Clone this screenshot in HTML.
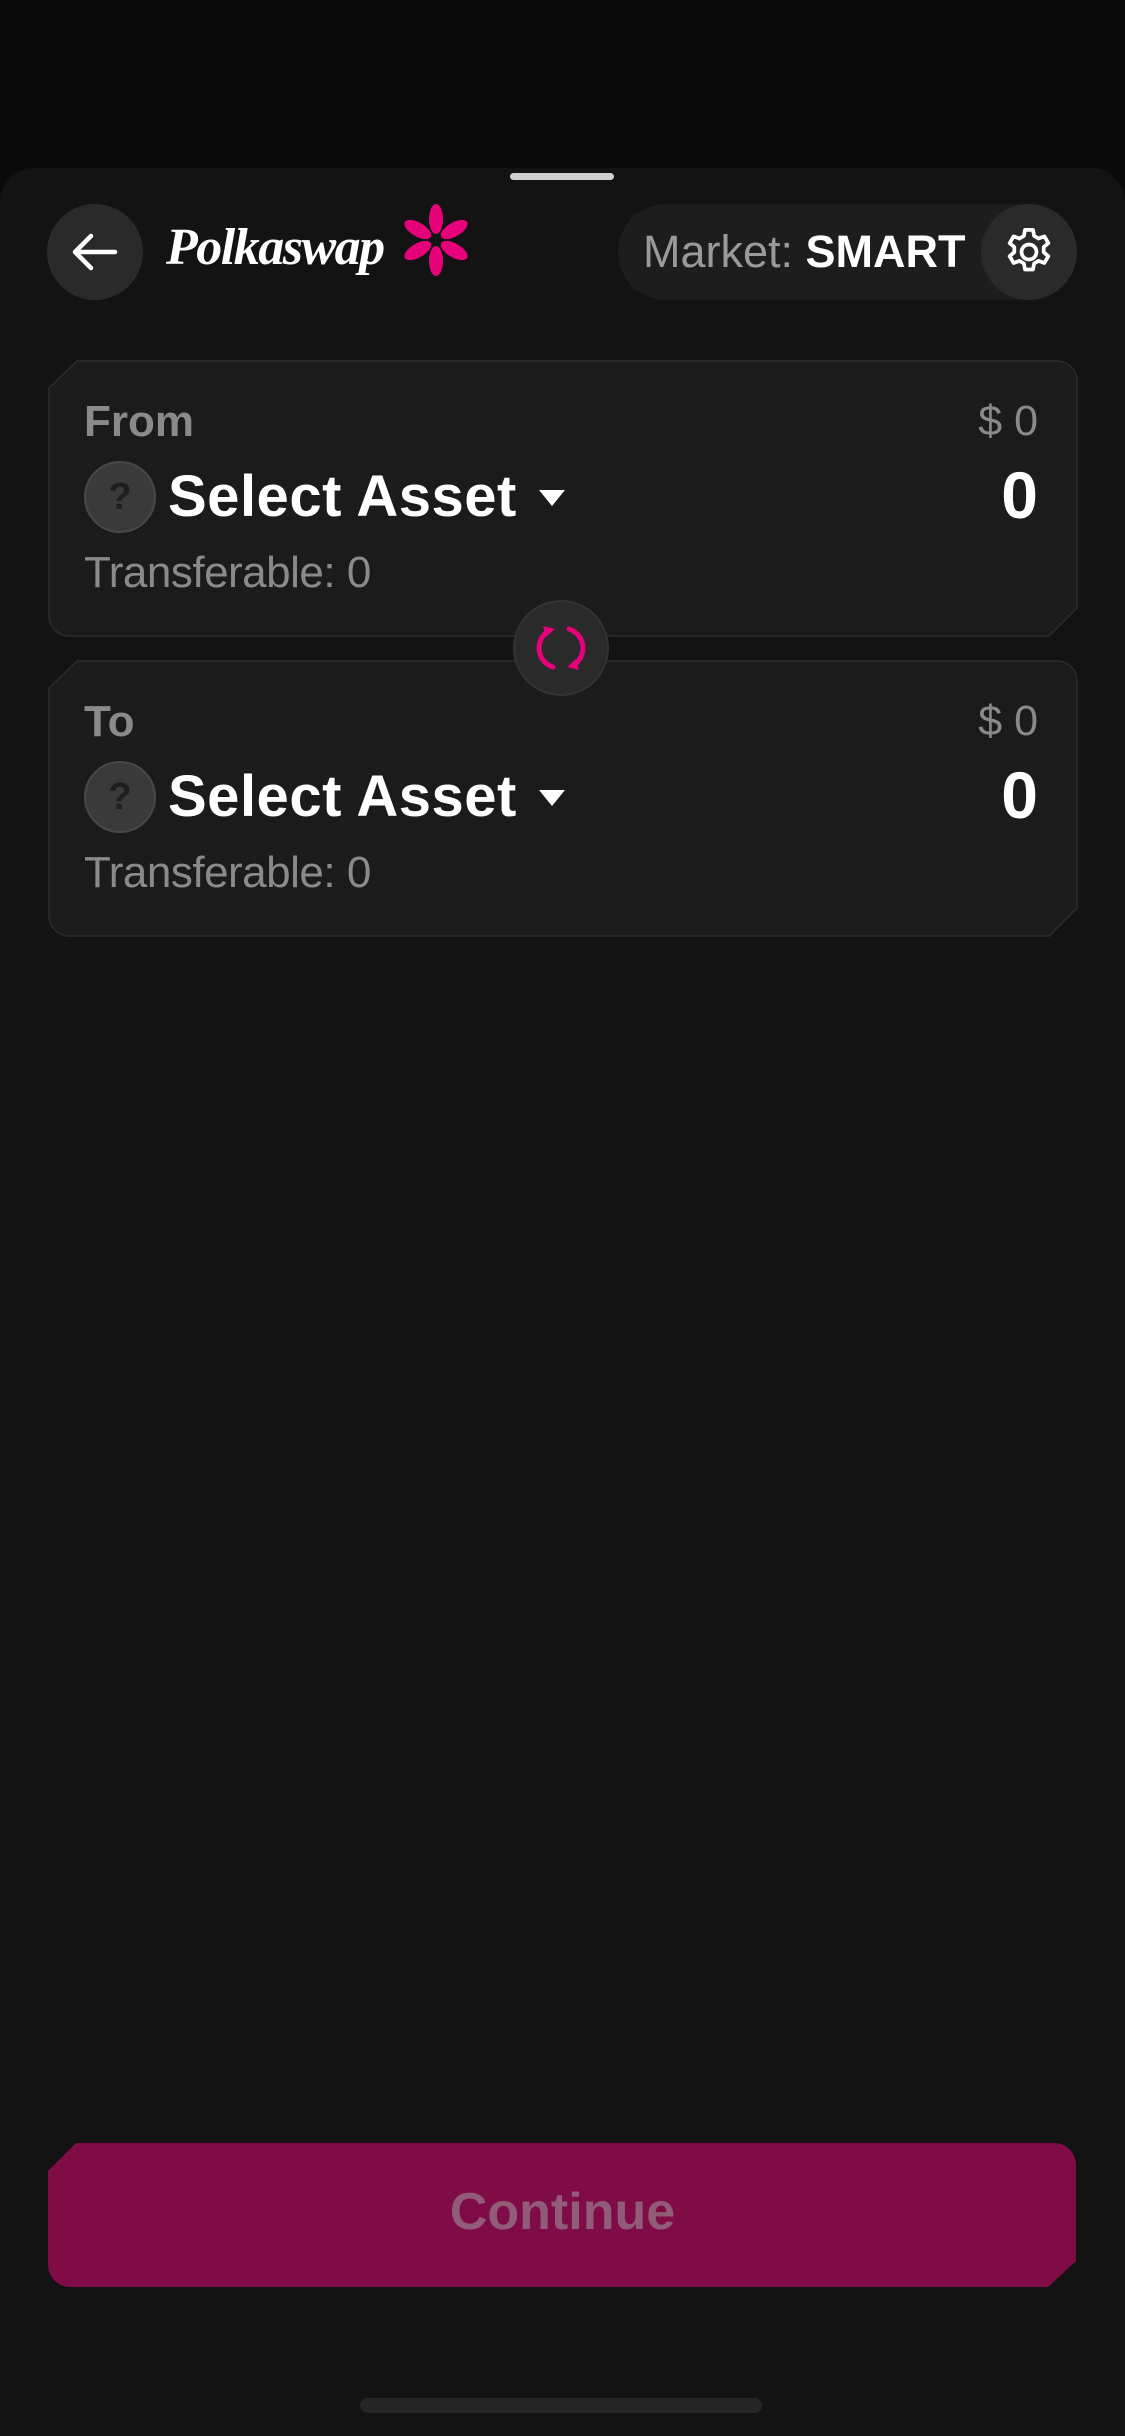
<!DOCTYPE html>
<html><head><meta charset="utf-8"><style>
*{margin:0;padding:0;box-sizing:border-box}
html,body{width:1125px;height:2436px;background:#0b0a0b;overflow:hidden;font-family:"Liberation Sans",sans-serif}
.sheet{position:absolute;left:0;top:168px;width:1125px;height:2268px;background:#131313;border-radius:34px 34px 0 0}
.abs{position:absolute}
.circ{position:absolute;border-radius:50%;background:#2a2a2a}
.lbl{position:absolute;color:#8a8a8a;font-weight:bold;font-size:44px}
.usd{position:absolute;right:87px;color:#8a8a8a;font-size:43px}
.sel{position:absolute;color:#fff;font-weight:bold;font-size:58px;letter-spacing:0.5px}
.zero{position:absolute;right:87px;color:#fff;font-weight:bold;font-size:66px}
.tr{position:absolute;color:#8a8a8a;font-size:44px;letter-spacing:-0.5px}
.q{position:absolute;width:72px;height:72px;border-radius:50%;background:#3a3a3a;border:2px solid #484848;color:#1e1e1e;font-weight:bold;font-size:38px;text-align:center;line-height:68px}
</style></head><body>
<div class="sheet">
<div class="abs" style="left:510px;top:5px;width:104px;height:7px;border-radius:4px;background:#cfcfcf"></div>
</div>
<div class="circ" style="left:47px;top:204px;width:96px;height:96px"></div>
<svg class="abs" style="left:67px;top:224px" width="56" height="56" viewBox="0 0 56 56"><path d="M48 28H10M24 12L8 28l16 16" stroke="#fff" stroke-width="4.5" fill="none" stroke-linecap="round" stroke-linejoin="round"/></svg>
<div class="abs" style="left:166px;top:218px;color:#fff;font-family:'Liberation Serif',serif;font-style:italic;font-weight:bold;font-size:52px;letter-spacing:-1.5px">Polkaswap</div>
<svg class="abs" style="left:400px;top:202px" width="72" height="76" viewBox="-36 -38 72 76">
<g fill="#e6007a"><ellipse cx="0" cy="-21" rx="7" ry="15"/><ellipse cx="0" cy="-21" rx="7" ry="15" transform="rotate(60)"/><ellipse cx="0" cy="-21" rx="7" ry="15" transform="rotate(120)"/><ellipse cx="0" cy="-21" rx="7" ry="15" transform="rotate(180)"/><ellipse cx="0" cy="-21" rx="7" ry="15" transform="rotate(240)"/><ellipse cx="0" cy="-21" rx="7" ry="15" transform="rotate(300)"/></g></svg>
<div class="abs" style="left:618px;top:204px;width:458px;height:96px;border-radius:48px;background:#1e1d1e"></div>
<div class="abs" style="left:643px;top:226px;font-size:45px;color:#9a9a9a">Market: <b style="color:#fff">SMART</b></div>
<div class="circ" style="left:981px;top:204px;width:96px;height:96px"></div>
<svg class="abs" style="left:1001px;top:224px" width="56" height="56" viewBox="0 0 24 24"><path fill="none" stroke="#fff" stroke-width="1.6" stroke-linejoin="round" d="M10.3 2.5h3.4l.5 2.6 1.9 1.1 2.5-.9 1.7 2.9-2 1.7v2.2l2 1.7-1.7 2.9-2.5-.9-1.9 1.1-.5 2.6h-3.4l-.5-2.6-1.9-1.1-2.5.9-1.7-2.9 2-1.7v-2.2l-2-1.7 1.7-2.9 2.5.9 1.9-1.1z"/><circle cx="12" cy="12" r="3.2" fill="none" stroke="#fff" stroke-width="1.6"/></svg>
<svg class="abs" style="left:48px;top:360px" width="1030" height="277"><path d="M29 1H1009a20 20 0 0 1 20 20V248L1001 276H21a20 20 0 0 1-20-20V28Z" fill="#1c1b1c" stroke="#2c2c2c" stroke-width="1.5"/></svg>
<svg class="abs" style="left:48px;top:660px" width="1030" height="277"><path d="M29 1H1009a20 20 0 0 1 20 20V248L1001 276H21a20 20 0 0 1-20-20V28Z" fill="#1c1b1c" stroke="#2c2c2c" stroke-width="1.5"/></svg>
<div class="lbl" style="left:84px;top:397px">From</div>
<div class="usd" style="top:397px">$ 0</div>
<div class="q" style="left:84px;top:461px">?</div>
<div class="sel" style="left:168px;top:463px">Select Asset</div>
<svg class="abs" style="left:537px;top:488px" width="30" height="20"><path d="M2 2h26L15 18z" fill="#fff"/></svg>
<div class="zero" style="top:457px">0</div>
<div class="tr" style="left:84px;top:548px">Transferable: 0</div>

<div class="lbl" style="left:84px;top:697px">To</div>
<div class="usd" style="top:697px">$ 0</div>
<div class="q" style="left:84px;top:761px">?</div>
<div class="sel" style="left:168px;top:763px">Select Asset</div>
<svg class="abs" style="left:537px;top:788px" width="30" height="20"><path d="M2 2h26L15 18z" fill="#fff"/></svg>
<div class="zero" style="top:757px">0</div>
<div class="tr" style="left:84px;top:848px">Transferable: 0</div>
<div class="circ" style="left:513px;top:600px;width:96px;height:96px;border:2px solid #333"></div>
<svg class="abs" style="left:531px;top:618px" width="60" height="60" viewBox="0 0 60 60"><g fill="none" stroke="#e6007a" stroke-width="5" stroke-linecap="round"><path d="M38 11A20 20 0 0 1 44 46"/><path d="M22 49A20 20 0 0 1 16 14"/></g><path d="M12 8l12 3-9 8z" fill="#e6007a"/><path d="M48 52l-12-3 9-8z" fill="#e6007a"/></svg>
<svg class="abs" style="left:48px;top:2143px" width="1030" height="144"><path d="M28 0H1006a22 22 0 0 1 22 22V118L1000 144H22a22 22 0 0 1-22-22V28Z" fill="#7f0c47"/></svg>
<div class="abs" style="left:0;top:2182px;width:1125px;text-align:center;color:#925b77;font-weight:bold;font-size:52px">Continue</div>
<div class="abs" style="left:360px;top:2398px;width:402px;height:15px;border-radius:8px;background:#262626"></div>
</body></html>
